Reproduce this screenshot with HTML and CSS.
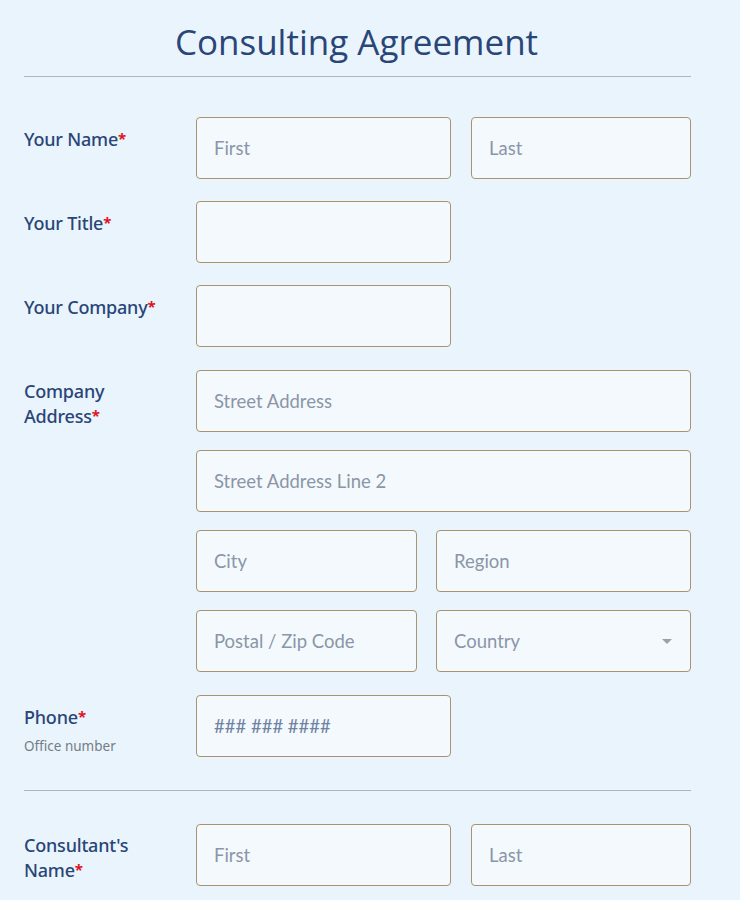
FILE: index.html
```html
<!DOCTYPE html>
<html lang="en">
<head>
    <meta charset="UTF-8">
    <meta name="viewport" content="width=device-width, initial-scale=1.0">
    <title>Consulting Agreement</title>
    <link rel="stylesheet" href="styles.css">
</head>
<body>
    <form class="form">
        <h1 class="form-title">Consulting Agreement</h1>
        <div class="divider"></div>

        <div class="row">
            <label class="label">Your Name<span class="req">*</span></label>
            <div class="fields name-fields">
                <input class="input" type="text" placeholder="First">
                <input class="input" type="text" placeholder="Last">
            </div>
        </div>

        <div class="row">
            <label class="label">Your Title<span class="req">*</span></label>
            <div class="fields">
                <input class="input half" type="text">
            </div>
        </div>

        <div class="row">
            <label class="label">Your Company<span class="req">*</span></label>
            <div class="fields">
                <input class="input half" type="text">
            </div>
        </div>

        <div class="row spaced">
            <label class="label">Company<br>Address<span class="req">*</span></label>
            <div class="fields address-fields">
                <input class="input wide" type="text" placeholder="Street Address">
                <input class="input wide" type="text" placeholder="Street Address Line 2">
                <input class="input" type="text" placeholder="City">
                <input class="input" type="text" placeholder="Region">
                <input class="input" type="text" placeholder="Postal / Zip Code">
                <div class="select">
                    <span>Country</span>
                    <span class="caret"></span>
                </div>
            </div>
        </div>

        <div class="row spaced">
            <div class="label">
                Phone<span class="req">*</span>
                <div class="sublabel">Office number</div>
            </div>
            <div class="fields">
                <input class="input half phone" type="text" placeholder="### ### ####">
            </div>
        </div>

        <div class="divider section"></div>

        <div class="row">
            <label class="label">Consultant's<br>Name<span class="req">*</span></label>
            <div class="fields name-fields">
                <input class="input" type="text" placeholder="First">
                <input class="input" type="text" placeholder="Last">
            </div>
        </div>
    </form>
</body>
</html>
```

FILE: styles.css
```css
body {
    background: #e9f4fc;
    margin: 0;
    font-family: "Noto Sans", "Lato", sans-serif;
}

.form {
    width: 667px;
    padding: 18px 0 0 24px;
}

.form-title {
    font-family: "Open Sans", sans-serif;
    font-weight: 400;
    font-size: 35px;
    color: #2a4577;
    text-align: center;
    margin: 0 0 0 -2px;
    line-height: 48px;
}

.divider {
    border-top: 1px solid #aeb5be;
    margin: 10px 0 40px;
}

.divider.section {
    margin: 32px 0 33px;
}

.row {
    display: grid;
    grid-template-columns: 172px 495px;
    margin-bottom: 22px;
}

.row.spaced {
    margin-top: 23px;
}

.label {
    padding-top: 9px;
    font-size: 18px;
    line-height: 24px;
    font-weight: 500;
    color: #2a4577;
    letter-spacing: -0.2px;
}

.req {
    color: #e0141e;
    font-size: 15px;
    font-weight: 700;
    vertical-align: 2px;
}

.sublabel {
    font-size: 13.5px;
    font-weight: 400;
    color: #767c86;
    margin-top: 5px;
    letter-spacing: 0;
}

.fields {
    display: grid;
    grid-template-columns: 255px;
}

.name-fields {
    grid-template-columns: 255px 220px;
    column-gap: 20px;
}

.address-fields {
    grid-template-columns: 221px 255px;
    column-gap: 19px;
    row-gap: 18px;
}

.wide {
    grid-column: 1 / -1;
}

.input,
.select {
    box-sizing: border-box;
    height: 62px;
    border: 1px solid #a8946c;
    border-radius: 4px;
    background: #f4f9fd;
    padding: 0 17px;
    font-family: "Lato", "Noto Sans", sans-serif;
    font-size: 18.5px;
    color: #2a4577;
    outline: none;
}

.input::placeholder {
    color: #8a96a7;
}

.phone::placeholder {
    color: #6e83a3;
}

.select {
    display: flex;
    align-items: center;
    justify-content: space-between;
    color: #8a96a7;
}

.caret {
    width: 0;
    height: 0;
    border-left: 5px solid transparent;
    border-right: 5px solid transparent;
    border-top: 5px solid #9aa1aa;
    margin-right: 1px;
}
```
